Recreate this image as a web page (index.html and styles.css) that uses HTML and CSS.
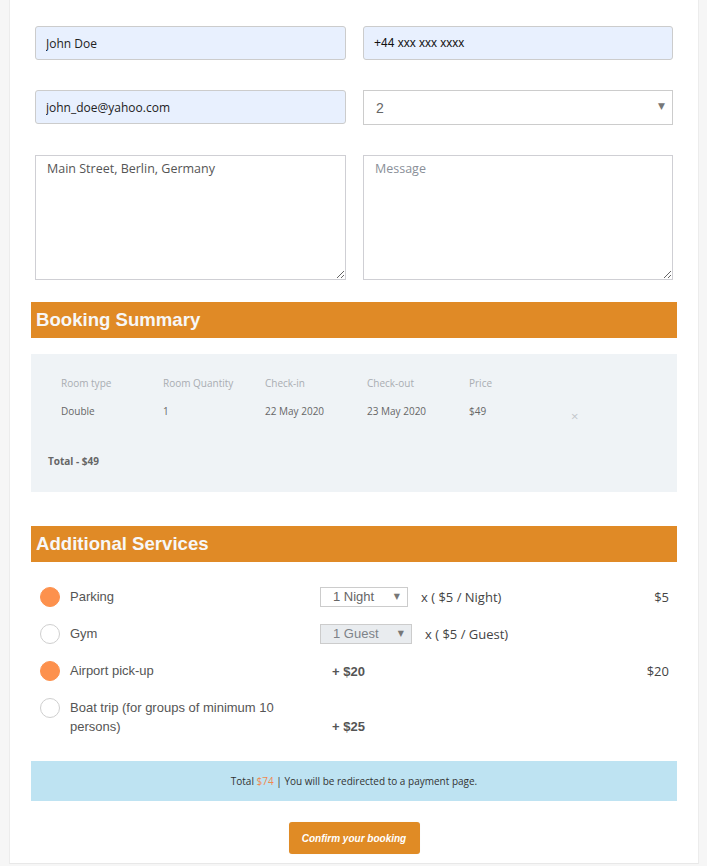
FILE: index.html
```html
<!DOCTYPE html>
<html lang="en">
<head>
<meta charset="utf-8">
<title>Booking</title>
<link rel="stylesheet" href="styles.css">
</head>
<body>
<div class="page">
  <form class="form-grid">
    <input class="field filled" type="text" value="John Doe">
    <input class="field filled phone" type="text" value="+44 xxx xxx xxxx">
    <input class="field filled" type="text" value="john_doe@yahoo.com">
    <div class="select-wrap">
      <select class="field select"><option>2</option></select>
      <span class="arrow">&#9660;</span>
    </div>
    <textarea class="area">Main Street, Berlin, Germany</textarea>
    <textarea class="area" placeholder="Message"></textarea>
  </form>

  <h2 class="section-title">Booking Summary</h2>
  <div class="summary">
    <div class="summary-table">
      <div class="th">Room type</div>
      <div class="th">Room Quantity</div>
      <div class="th">Check-in</div>
      <div class="th">Check-out</div>
      <div class="th">Price</div>
      <div class="th"></div>
      <div class="td">Double</div>
      <div class="td">1</div>
      <div class="td">22 May 2020</div>
      <div class="td">23 May 2020</div>
      <div class="td">$49</div>
      <div class="td remove">&#215;</div>
    </div>
    <div class="summary-total">Total - $49</div>
  </div>

  <h2 class="section-title services-title">Additional Services</h2>
  <div class="services">
    <div class="service">
      <span class="radio checked"></span>
      <span class="label">Parking</span>
      <span class="mid">
        <span class="mini-select night">1 Night<span class="mini-arrow">&#9660;</span></span>
        <span class="rate">x ( $5 / Night)</span>
      </span>
      <span class="price">$5</span>
    </div>
    <div class="service">
      <span class="radio"></span>
      <span class="label">Gym</span>
      <span class="mid">
        <span class="mini-select guest disabled">1 Guest<span class="mini-arrow">&#9660;</span></span>
        <span class="rate">x ( $5 / Guest)</span>
      </span>
      <span class="price"></span>
    </div>
    <div class="service">
      <span class="radio checked"></span>
      <span class="label">Airport pick-up</span>
      <span class="mid"><span class="flat">+ $20</span></span>
      <span class="price">$20</span>
    </div>
    <div class="service tall">
      <span class="radio"></span>
      <span class="label">Boat trip (for groups of minimum 10 persons)</span>
      <span class="mid bottom"><span class="flat">+ $25</span></span>
      <span class="price"></span>
    </div>
  </div>

  <div class="total-bar">Total <span class="amount">$74</span> | You will be redirected to a payment page.</div>

  <div class="actions">
    <button class="confirm" type="button">Confirm your booking</button>
  </div>
</div>
</body>
</html>
```
FILE: styles.css
```css
* { box-sizing: border-box; }

html, body {
  margin: 0;
  padding: 0;
}

body {
  background: #f6f6f6;
  font-family: "Open Sans", "Liberation Sans", Arial, sans-serif;
}

.page {
  margin: 0 8px 0 9px;
  background: #ffffff;
  border-left: 1px solid #ececec;
  border-right: 1px solid #ececec;
  border-bottom: 1px solid #e8e8e8;
  padding: 26px 21px 9px 21px;
}

/* ---------- form ---------- */
.form-grid {
  display: grid;
  grid-template-columns: 311px 310px;
  column-gap: 17px;
  row-gap: 30px;
  padding: 0 4px;
  margin: 0;
}

.field {
  height: 34px;
  width: 100%;
  border: 1px solid #cccccc;
  border-radius: 3px;
  padding: 0 10px;
  font-family: "Open Sans", "Liberation Sans", sans-serif;
  font-size: 12px;
  color: #222222;
  outline: none;
}

.filled {
  background: #e8f0fe;
}

.phone {
  font-family: "Liberation Sans", Arial, sans-serif;
  color: #111111;
}

.select-wrap {
  position: relative;
}

.select {
  -webkit-appearance: none;
  appearance: none;
  height: 35px;
  border-radius: 0;
  background: #ffffff;
  font-family: "Liberation Sans", Arial, sans-serif;
  font-size: 14px;
  color: #666666;
  padding-left: 12px;
}

.arrow {
  position: absolute;
  right: 8px;
  top: 11px;
  font-size: 9px;
  color: #777777;
  pointer-events: none;
  font-family: "DejaVu Sans", sans-serif;
}

.area {
  height: 125px;
  width: 100%;
  border: 1px solid #cfcfd4;
  border-radius: 0;
  padding: 4px 11px;
  font-family: "Open Sans", "Liberation Sans", sans-serif;
  font-size: 12.5px;
  line-height: 18px;
  color: #555555;
  outline: none;
  margin: 0;
  display: block;
}

.area::placeholder {
  color: #8a8f98;
}

/* ---------- section titles ---------- */
.section-title {
  margin: 22px 0 16px 0;
  height: 36px;
  line-height: 36px;
  background: #e08a26;
  color: #f7f7f7;
  font-family: "Liberation Sans", Arial, sans-serif;
  font-weight: bold;
  font-size: 18.6px;
  padding-left: 5px;
}

.services-title {
  margin: 34px 0 25px 0;
}

/* ---------- summary ---------- */
.summary {
  background: #eff3f6;
  padding: 22px 0 24px 17px;
  height: 138px;
}

.summary-table {
  display: grid;
  grid-template-columns: repeat(5, 102px) 20px;
  row-gap: 14px;
  margin-left: 13px;
  font-size: 10px;
  line-height: 14px;
}

.th {
  color: #a9adb2;
}

.td {
  color: #666666;
}

.remove {
  color: #c2c5ca;
  font-size: 13px;
  padding-top: 5px;
  padding-left: 0;
}

.summary-total {
  margin-top: 31px;
  font-size: 10px;
  line-height: 14px;
  font-weight: bold;
  color: #666666;
}

/* ---------- services ---------- */
.services {
  display: flex;
  flex-direction: column;
  gap: 17px;
  margin-bottom: 25px;
}

.service {
  display: grid;
  grid-template-columns: 30px 250px 1fr auto;
  align-items: center;
  padding: 0 8px 0 9px;
  min-height: 20px;
}

.service.tall {
  align-items: start;
}

.radio {
  width: 20px;
  height: 20px;
  border-radius: 50%;
  border: 1px solid #cfcfcf;
  background: #ffffff;
}

.radio.checked {
  border-color: #fd914d;
  background: #fd914d;
}

.label {
  font-family: "Liberation Sans", Arial, sans-serif;
  font-size: 13px;
  line-height: 20px;
  color: #555555;
  padding-right: 30px;
}

.tall .label {
  line-height: 19px;
}

.mid {
  display: flex;
  align-items: center;
  gap: 13px;
}

.mid.bottom {
  align-self: end;
}

.mini-select {
  position: relative;
  display: block;
  height: 20px;
  border: 1px solid #cccccc;
  background: #ffffff;
  font-family: "Liberation Sans", Arial, sans-serif;
  font-size: 13px;
  line-height: 18px;
  color: #666666;
  padding-left: 12px;
}

.mini-select.night { width: 88px; }
.mini-select.guest { width: 92px; }

.mini-select.disabled {
  background: #e9ecef;
  color: #7d8288;
}

.mini-arrow {
  position: absolute;
  right: 7px;
  top: 0;
  font-size: 8px;
  color: #777777;
  font-family: "DejaVu Sans", sans-serif;
}

.rate {
  font-size: 13px;
  color: #444444;
  line-height: 20px;
}

.flat {
  font-family: "Liberation Sans", Arial, sans-serif;
  font-weight: bold;
  font-size: 13px;
  line-height: 19px;
  color: #555555;
  padding-left: 12px;
}

.price {
  font-size: 13px;
  color: #444444;
  text-align: right;
  line-height: 20px;
}

/* ---------- total / actions ---------- */
.total-bar {
  height: 40px;
  line-height: 40px;
  background: #bee3f2;
  text-align: center;
  font-size: 10px;
  color: #333333;
}

.amount {
  color: #f0894f;
}

.actions {
  display: flex;
  justify-content: center;
  margin-top: 21px;
}

.confirm {
  width: 131px;
  height: 32px;
  border: none;
  border-radius: 3px;
  background: #e08b25;
  color: #ffffff;
  font-family: "Liberation Sans", Arial, sans-serif;
  font-weight: bold;
  font-style: italic;
  font-size: 10px;
  padding: 0;
  box-shadow: 0 0 1px rgba(0,0,0,0.08);
}
```
